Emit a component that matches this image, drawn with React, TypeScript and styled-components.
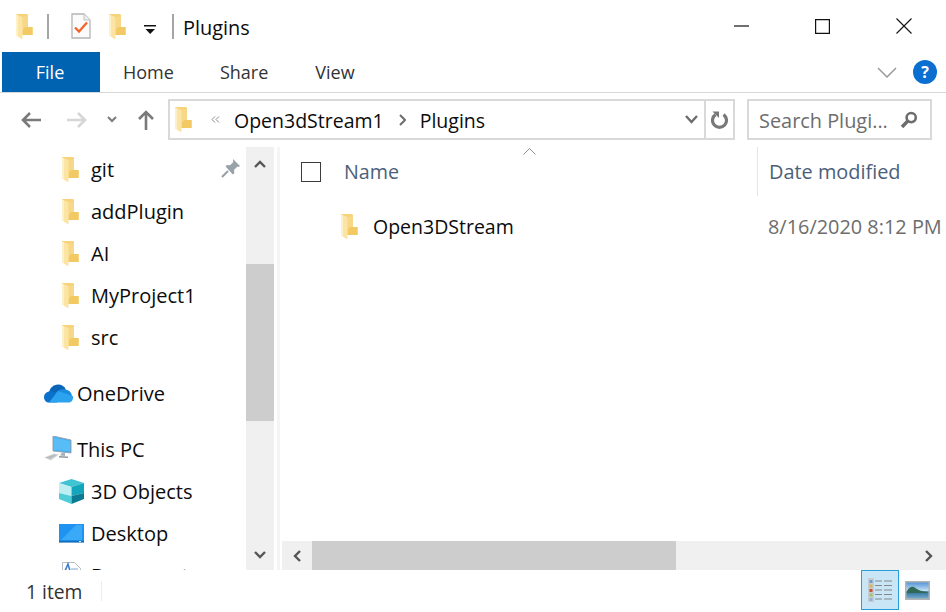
import React from "react";
import styled, { createGlobalStyle } from "styled-components";

const Global = createGlobalStyle`
  html, body { margin: 0; padding: 0; background: #fff; overflow: hidden; }
  body { font-family: "Open Sans", "Noto Sans", "Liberation Sans", sans-serif; }
  * { box-sizing: border-box; }
`;

const Win = styled.div`
  width: 946px; height: 612px; display: flex; flex-direction: column;
  overflow: hidden; background: #fff; color: #0c0c0c; font-size: 19.5px;
`;
const TitleBar = styled.div`
  height: 52px; flex: none; display: flex; align-items: center; padding: 0 2px 0 16px;
`;
const QuickSep = styled.div`
  width: 2px; height: 25px; background: #a5a5a5; flex: none; margin-left: ${p => p.$l}px;
`;
const QuickSlot = styled.div`
  display: flex; align-items: center; flex: none; margin-left: ${p => p.$l}px; padding-top: ${p => p.$t || 0}px;
`;
const WindowTitle = styled.div`
  margin-left: 9px; font-size: 19.9px; color: #0c0c0c; flex: 1; padding-top: 2px;
`;
const Caption = styled.div`
  width: 81px; height: 52px; flex: none; display: flex; align-items: center; justify-content: center;
`;
const Tabs = styled.div`
  height: 41px; flex: none; display: flex; align-items: flex-start; padding-left: 2px;
  border-bottom: 1px solid #d8d8d8;
`;
const FileTab = styled.div`
  width: 98px; height: 40px; background: #0063b1; color: #fff; display: flex; align-items: center;
  justify-content: center; font-size: 18px; padding-right: 2px;
`;
const Tab = styled.div`
  display: flex; align-items: center; font-size: 18px; color: #333; height: 40px;
  margin-left: ${p => p.$l}px;
`;
const TabEnd = styled.div`
  margin-left: auto; display: flex; align-items: center; gap: 16px; padding-right: 9px; height: 40px;
`;
const Help = styled.div`
  width: 24px; height: 24px; border-radius: 50%; background: #0a6fd0; color: #fff; font-weight: 700;
  font-size: 16px; display: flex; align-items: center; justify-content: center;
`;
const NavRow = styled.div`
  height: 53px; flex: none; display: flex; align-items: flex-start; padding-top: 6px;
`;
const NavButton = styled.div`
  flex: none; width: ${p => p.$w}px; height: 41px; display: flex; align-items: center; justify-content: center;
`;
const AddressBar = styled.div`
  width: 567px; height: 41px; margin-left: 12px; flex: none; border: 2px solid #d9d9d9; display: flex; align-items: center;
`;
const Crumb = styled.span`
  font-size: 19.5px; color: #0c0c0c; margin-left: ${p => p.$l}px; padding-top: 2px;
`;
const AddressEnd = styled.div`
  margin-left: auto; display: flex; align-items: center; height: 100%;
`;
const Refresh = styled.div`
  width: 29px; height: 37px; border-left: 2px solid #d9d9d9; display: flex; align-items: center; justify-content: center;
`;
const SearchBox = styled.div`
  width: 185px; height: 41px; margin-left: 12px; flex: none; border: 2px solid #d9d9d9; display: flex; align-items: center;
  padding: 0 12px 0 10px; justify-content: space-between; color: #6d6d6d; font-size: 19.9px;
`;
const SearchText = styled.span`
  padding-top: 2px;
`;
const Main = styled.div`
  flex: 1; min-height: 0; display: flex;
`;
const Side = styled.div`
  width: 246px; flex: none; overflow: hidden; padding-top: 2px;
`;
const SideRow = styled.div`
  height: 42px; display: flex; align-items: center; position: relative; font-size: 20px; color: #0c0c0c;
  padding-left: ${p => p.$l}px; margin-top: ${p => p.$t || 0}px;
`;
const SideLabel = styled.span`
  margin-left: ${p => p.$l}px;
`;
const Pin = styled.div`
  position: absolute; left: 221px; top: 10px;
`;
const VScroll = styled.div`
  width: 28px; flex: none; background: #f0f0f0; display: flex; flex-direction: column; margin-top: 1px;
`;
const VArrow = styled.div`
  height: ${p => p.$h}px; flex: none; display: flex; align-items: center; justify-content: center;
`;
const VSpace = styled.div`
  flex: none; height: ${p => p.$h}px;
`;
const VThumb = styled.div`
  height: 157px; flex: none; background: #cdcdcd;
`;
const Splitter = styled.div`
  width: 3px; margin-left: 3px; margin-right: 2px; flex: none; background: #f5f5f5; margin-top: 1px;
`;
const Content = styled.div`
  flex: 1; min-width: 0; display: flex; flex-direction: column;
`;
const List = styled.div`
  flex: 1; min-height: 0; overflow: hidden; position: relative;
`;
const SortMark = styled.div`
  position: absolute; left: 241px; top: 2px; line-height: 0;
`;
const HeaderRow = styled.div`
  height: 49px; margin-top: 1px; display: flex; align-items: center; padding-left: 19px;
`;
const CheckBox = styled.div`
  width: 20px; height: 20px; border: 1px solid #3c3c3c; flex: none;
`;
const NameHead = styled.div`
  width: 413px; margin-left: 23px; flex: none; color: #4c607a; font-size: 19.7px;
`;
const HeadDivider = styled.div`
  width: 1px; height: 100%; background: #e5e5e5; flex: none;
`;
const DateHead = styled.div`
  margin-left: 11px; color: #4c607a; font-size: 19.9px; white-space: nowrap;
`;
const FileRow = styled.div`
  height: 42px; margin-top: 9px; display: flex; align-items: center; padding-left: 59px; white-space: nowrap;
`;
const FileName = styled.div`
  width: 395px; margin-left: 15px; flex: none; font-size: 19.5px; color: #0c0c0c;
`;
const FileDate = styled.div`
  color: #6d6d6d; font-size: 19.9px;
`;
const HScroll = styled.div`
  height: 29px; flex: none; background: #f0f0f0; display: flex; align-items: center;
`;
const HArrow = styled.div`
  width: 30px; height: 100%; flex: none; display: flex; align-items: center; justify-content: center;
  padding-right: ${p => p.$r || 0}px;
`;
const HThumb = styled.div`
  width: 364px; height: 100%; flex: none; background: #cdcdcd;
`;
const HGrow = styled.div`
  flex: 1;
`;
const Status = styled.div`
  height: 42px; flex: none; display: flex; align-items: center; padding-left: 26px; font-size: 19.3px; color: #333;
`;
const StatusText = styled.span`
  width: 75px; flex: none;
`;
const StatusSep = styled.div`
  width: 1px; height: 20px; background: #ececec; flex: none;
`;
const ViewBtns = styled.div`
  margin-left: auto; display: flex; align-items: flex-start; height: 100%; padding-right: 16px;
`;
const ViewBtn = styled.div`
  width: 38px; height: 40px; display: flex; align-items: center; justify-content: center;
  background: ${p => (p.$on ? "#c9e6f6" : "transparent")};
  border: 1px solid ${p => (p.$on ? "#26a0da" : "transparent")};
`;
const LargeSlot = styled.div`
  width: 31px; height: 40px; display: flex; align-items: center; justify-content: flex-end;
`;

const Folder = () => (
  <svg width="17" height="25" viewBox="0 0 17 25" style={{ display: "block" }}>
    <path d="M0 0h11l1 1v12h4.500v8H6v4L0 21z" fill="#f6d27a" />
    <path d="M6.500 2.500h5.500V13h4.500v8H6.500z" fill="#f7d888" />
    <path d="M9 13h7.500v8H6.500v-5z" fill="#f3c964" />
    <path d="M0 .5l6.500 2.500v22L0 21z" fill="#fce5a4" />
    <path d="M0 .5l2 .8V22.300L0 21z" fill="#fdf1cb" />
  </svg>
);

const Stroke = ({ w, h, vb, d, c, sw = 2, fill = "none" }: any) => (
  <svg width={w} height={h} viewBox={vb || `0 0 ${w} ${h}`} style={{ display: "block" }}>
    <path d={d} stroke={c} strokeWidth={sw} fill={fill} />
  </svg>
);

const NoteCheck = () => (
  <svg width="20" height="26" viewBox="0 0 20 26" style={{ display: "block" }}>
    <path d="M1 1h12l6 6v18H1z" fill="#fbfbfb" stroke="#b5b5b5" strokeWidth="1.3" />
    <path d="M13 1v6h6" fill="#efefef" stroke="#c2c2c2" strokeWidth="1" />
    <path d="M4 14.500l4 4 8-9" fill="none" stroke="#f4652a" strokeWidth="2.300" />
  </svg>
);
const OneDrive = () => (
  <svg width="29" height="19" viewBox="0 0 29 19" style={{ display: "block" }}>
    <path d="M5 9C5.500 4 9.500 0.500 14 0.500c3.500 0 6.300 2 7.700 4.800L18 14H5z" fill="#0a64b8" />
    <path d="M21 5.500c4 .3 6.500 3 7 6.500L16 17 11 9.500C13 7 17 4.500 21 5.500z" fill="#1b8be0" />
    <path d="M6 7.200C2.400 7.500 0 10.200 0 13.200c0 3 2.300 5.300 5 5.300h8l2-5L10 8.300C8.800 7.500 7.400 7 6 7.200z" fill="#0c71cb" />
    <path d="M5 18.500h19.500c2.500 0 4.500-2 4.500-5 0-.5 0-1-.2-1.500L14 7 5 18.500z" fill="#2ba3ef" />
  </svg>
);
const ThisPC = () => (
  <svg width="28" height="26" viewBox="0 0 28 26" style={{ display: "block" }}>
    <path d="M9 0l18 4v13L9 15z" fill="#3ea9ee" stroke="#9aa7b1" strokeWidth="1" />
    <path d="M10 1.500l16 3.500v10.500L10 14z" fill="#58bdf7" />
    <path d="M18 16.500l3 .5v3l-5-.5z" fill="#aab3ba" />
    <path d="M15 20l9 .6v1.400l-9-.6z" fill="#8f9aa3" />
    <path d="M0 21.500l10-4 5 1-8 6z" fill="#d2d6d9" />
    <path d="M2 21.500l8-3 3 .6-7 4z" fill="#b6bcc1" />
  </svg>
);
const Cube = () => (
  <svg width="25" height="25" viewBox="0 0 25 25" style={{ display: "block" }}>
    <path d="M12.500 0L25 4 12.500 8 0 4z" fill="#40c3d2" />
    <path d="M0 4l12.500 4v9L0 14z" fill="#bdeef2" />
    <path d="M25 4l-12.500 4v9L25 14z" fill="#12a5bb" />
    <path d="M0 14l12.500 3v8L0 20z" fill="#4ecdd9" />
    <path d="M25 14l-12.500 3v8L25 20z" fill="#0a7b93" />
  </svg>
);
const Desktop = () => (
  <svg width="25" height="19" viewBox="0 0 25 19" style={{ display: "block" }}>
    <rect x="0" y="0" width="25" height="18" fill="#1e93f1" />
    <path d="M2 16L17 1h6v15z" fill="#39a9f8" />
    <rect x="0" y="16.800" width="25" height="1.800" fill="#136fb9" />
    <rect x="20" y="17" width="2" height="1" fill="#d7ecfa" />
  </svg>
);
const DocIcon = () => (
  <svg width="19" height="26" viewBox="0 0 19 26" style={{ display: "block" }}>
    <path d="M.5.5h12l6 6v19H.5z" fill="#fff" stroke="#b7bcc2" />
    <path d="M3 9l3-7 2 7" fill="none" stroke="#3f7fc9" strokeWidth="1.600" />
    <path d="M9 7h7M9 10h7M3 13h13M3 16h13" stroke="#7fa9d6" strokeWidth="1.200" />
  </svg>
);
const PinIcon = () => (
  <svg width="20" height="20" viewBox="0 0 20 20" style={{ display: "block" }}>
    <path d="M12 1l7 7-1.600 1-1-.4-3.400 3.400.4 3-1.600 1.400L4.600 8.400 6 7l3 .3L12.400 4 12 2.500z" fill="#98a2a9" />
    <path d="M7 13L1 19" stroke="#98a2a9" strokeWidth="2.200" />
  </svg>
);
const SearchIcon = () => (
  <svg width="18" height="18" viewBox="0 0 18 18" style={{ display: "block" }}>
    <circle cx="11.200" cy="6.600" r="4.600" fill="none" stroke="#6d6d6d" strokeWidth="2.600" />
    <path d="M7.800 10L2 16" stroke="#6d6d6d" strokeWidth="3.400" />
  </svg>
);
const RefreshIcon = () => (
  <svg width="18" height="18" viewBox="0 0 18 18" style={{ display: "block" }}>
    <path d="M12.500 3.600A7 7 0 1 1 4.500 3.600" fill="none" stroke="#787878" strokeWidth="3.200" />
    <path d="M1.500 0.500h6.500v6.500z" fill="#787878" />
  </svg>
);
const DetailsView = () => (
  <svg width="25" height="24" viewBox="0 0 25 24" style={{ display: "block" }}>
    <rect x="0" y="0" width="6" height="24" fill="#c5cdd2" />
    <rect x="1.500" y="2" width="3" height="3" fill="#6fa0c9" />
    <rect x="1.500" y="6.500" width="3" height="3" fill="#d7b35a" />
    <rect x="1.500" y="11" width="3" height="3" fill="#c8553d" />
    <rect x="1.500" y="15.500" width="3" height="3" fill="#a8c26e" />
    <rect x="1.500" y="20" width="3" height="3" fill="#8fb5d6" />
    <path d="M7 3h7M16 3h8M7 7.500h7M16 7.500h8M7 12h7M16 12h8M7 16.500h7M16 16.500h8M7 21h7M16 21h8" stroke="#888" strokeWidth="1.200" />
  </svg>
);
const LargeView = () => (
  <svg width="25" height="19" viewBox="0 0 25 19" style={{ display: "block" }}>
    <defs>
      <linearGradient id="sky" x1="0" y1="0" x2="0" y2="1">
        <stop offset="0" stopColor="#4a8fd8" />
        <stop offset="0.55" stopColor="#cfe5f3" />
        <stop offset="0.56" stopColor="#2b6e9c" />
        <stop offset="1" stopColor="#7fb1cf" />
      </linearGradient>
    </defs>
    <rect x="0.750" y="0.750" width="23.500" height="17.500" fill="url(#sky)" stroke="#b4b4b4" strokeWidth="1.500" />
    <path d="M2 10c3-5 6-5 9-2.500 3 2 6 3 11 3.500v1H2z" fill="#2f6a56" />
  </svg>
);

export default function App() {
  return (
    <Win>
      <Global />
      <TitleBar>
        <Folder />
        <QuickSep $l={14} />
        <QuickSlot $l={22}><NoteCheck /></QuickSlot>
        <QuickSlot $l={18}><Folder /></QuickSlot>
        <QuickSlot $l={18} $t={8}>
          <svg width="13" height="11" viewBox="0 0 13 11" style={{ display: "block" }}>
            <path d="M0 .750h12" stroke="#111" strokeWidth="1.500" />
            <path d="M1.500 4h9.500L6.200 9z" fill="#111" />
          </svg>
        </QuickSlot>
        <QuickSep $l={15} />
        <WindowTitle>Plugins</WindowTitle>
        <Caption><Stroke w={16} h={2} d="M0 1h15" c="#111" sw={1.200} /></Caption>
        <Caption><Stroke w={15} h={15} d="M.6.6h13.800v13.800H.6z" c="#111" sw={1.200} /></Caption>
        <Caption><Stroke w={16} h={16} d="M.5.5l15 15M15.500.5l-15 15" c="#111" sw={1.100} /></Caption>
      </TitleBar>
      <Tabs>
        <FileTab>File</FileTab>
        <Tab $l={23}>Home</Tab>
        <Tab $l={46}>Share</Tab>
        <Tab $l={47}>View</Tab>
        <TabEnd>
          <Stroke w={20} h={11} d="M1 1l9 9 9-9" c="#9a9a9a" sw={1.500} />
          <Help>?</Help>
        </TabEnd>
      </Tabs>
      <NavRow>
        <NavButton $w={20} />
        <NavButton $w={22}><Stroke w={20} h={16} d="M20 8H2M9 1L2 8l7 7" c="#7a7a7a" sw={2.600} /></NavButton>
        <NavButton $w={24} />
        <NavButton $w={22}><Stroke w={20} h={16} d="M0 8h18M11 1l7 7-7 7" c="#d6d6d6" sw={2.600} /></NavButton>
        <NavButton $w={48}><Stroke w={10} h={7} d="M1 1l4 4 4-4" c="#7a7a7a" sw={2} /></NavButton>
        <NavButton $w={20}><Stroke w={16} h={20} d="M8 20V2M1 9l7-7 7 7" c="#7a7a7a" sw={2.600} /></NavButton>
        <AddressBar>
          <QuickSlot $l={5}><Folder /></QuickSlot>
          <QuickSlot $l={19}>
            <Stroke w={9} h={7} d="M4 .5L1 3.500l3 3M8 .5L5 3.500l3 3" c="#8a8a8a" sw={1} />
          </QuickSlot>
          <Crumb $l={14}>Open3dStream1</Crumb>
          <QuickSlot $l={15}><Stroke w={7} h={12} d="M1 1l5 5-5 5" c="#6d6d6d" sw={2} /></QuickSlot>
          <Crumb $l={14}>Plugins</Crumb>
          <AddressEnd>
            <QuickSlot $l={0}><Stroke w={13} h={9} d="M1 1l5.500 6L12 1" c="#6d6d6d" sw={2.400} /></QuickSlot>
            <QuickSlot $l={6}><Refresh><RefreshIcon /></Refresh></QuickSlot>
          </AddressEnd>
        </AddressBar>
        <SearchBox>
          <SearchText>Search Plugi...</SearchText>
          <SearchIcon />
        </SearchBox>
      </NavRow>
      <Main>
        <Side>
          <SideRow $l={62}><Folder /><SideLabel $l={12}>git</SideLabel><Pin><PinIcon /></Pin></SideRow>
          <SideRow $l={62}><Folder /><SideLabel $l={12}>addPlugin</SideLabel></SideRow>
          <SideRow $l={62}><Folder /><SideLabel $l={12}>AI</SideLabel></SideRow>
          <SideRow $l={62}><Folder /><SideLabel $l={12}>MyProject1</SideLabel></SideRow>
          <SideRow $l={62}><Folder /><SideLabel $l={12}>src</SideLabel></SideRow>
          <SideRow $l={44} $t={14}><OneDrive /><SideLabel $l={4}>OneDrive</SideLabel></SideRow>
          <SideRow $l={44} $t={14}><ThisPC /><SideLabel $l={5}>This PC</SideLabel></SideRow>
          <SideRow $l={59}><Cube /><SideLabel $l={7}>3D Objects</SideLabel></SideRow>
          <SideRow $l={59}><Desktop /><SideLabel $l={7}>Desktop</SideLabel></SideRow>
          <SideRow $l={62}><DocIcon /><SideLabel $l={10}>Documents</SideLabel></SideRow>
        </Side>
        <VScroll>
          <VArrow $h={34}><Stroke w={12} h={8} d="M1 7l5-5 5 5" c="#555" sw={2.400} /></VArrow>
          <VSpace $h={83} />
          <VThumb />
          <HGrow />
          <VArrow $h={30}><Stroke w={12} h={8} d="M1 1l5 5 5-5" c="#555" sw={2.400} /></VArrow>
        </VScroll>
        <Splitter />
        <Content>
          <List>
            <SortMark><Stroke w={13} h={7} d="M.5 6.500L6.500.5l6 6" c="#8f8f8f" sw={1} /></SortMark>
            <HeaderRow>
              <CheckBox />
              <NameHead>Name</NameHead>
              <HeadDivider />
              <DateHead>Date modified</DateHead>
            </HeaderRow>
            <FileRow>
              <Folder />
              <FileName>Open3DStream</FileName>
              <FileDate>8/16/2020 8:12 PM</FileDate>
            </FileRow>
          </List>
          <HScroll>
            <HArrow><Stroke w={8} h={12} d="M7 1L2 6l5 5" c="#555" sw={2.400} /></HArrow>
            <HThumb />
            <HGrow />
            <HArrow $r={4}><Stroke w={8} h={12} d="M1 1l5 5-5 5" c="#555" sw={2.400} /></HArrow>
          </HScroll>
        </Content>
      </Main>
      <Status>
        <StatusText>1 item</StatusText>
        <StatusSep />
        <ViewBtns>
          <ViewBtn $on><DetailsView /></ViewBtn>
          <LargeSlot><LargeView /></LargeSlot>
        </ViewBtns>
      </Status>
    </Win>
  );
}
